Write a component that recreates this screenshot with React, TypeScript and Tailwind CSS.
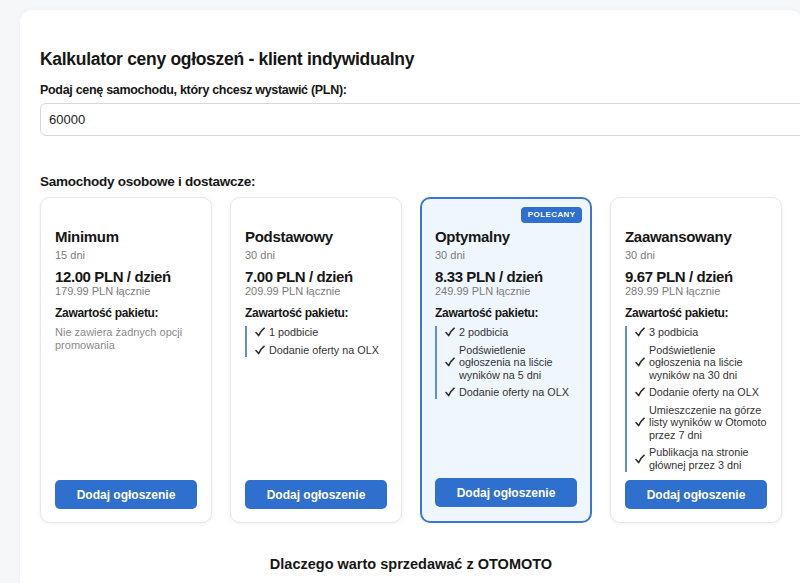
import React from "react";

type Item = React.ReactNode;

type Plan = {
  name: string;
  days: string;
  perDay: string;
  total: string;
  items: Item[] | null;
  featured?: boolean;
};

const plans: Plan[] = [
  {
    name: "Minimum",
    days: "15 dni",
    perDay: "12.00 PLN / dzień",
    total: "179.99 PLN łącznie",
    items: null,
  },
  {
    name: "Podstawowy",
    days: "30 dni",
    perDay: "7.00 PLN / dzień",
    total: "209.99 PLN łącznie",
    items: ["1 podbicie", "Dodanie oferty na OLX"],
  },
  {
    name: "Optymalny",
    days: "30 dni",
    perDay: "8.33 PLN / dzień",
    total: "249.99 PLN łącznie",
    featured: true,
    items: [
      "2 podbicia",
      <>
        Podświetlenie
        <br />
        ogłoszenia na liście
        <br />
        wyników na 5 dni
      </>,
      "Dodanie oferty na OLX",
    ],
  },
  {
    name: "Zaawansowany",
    days: "30 dni",
    perDay: "9.67 PLN / dzień",
    total: "289.99 PLN łącznie",
    items: [
      "3 podbicia",
      <>
        Podświetlenie
        <br />
        ogłoszenia na liście
        <br />
        wyników na 30 dni
      </>,
      "Dodanie oferty na OLX",
      <>
        Umieszczenie na górze
        <br />
        listy wyników w Otomoto
        <br />
        przez 7 dni
      </>,
      <>
        Publikacja na stronie
        <br />
        głównej przez 3 dni
      </>,
    ],
  },
];

function Check() {
  return (
    <svg width="10" height="10" viewBox="0 0 10 10" className="shrink-0">
      <path
        d="M1 5.6 L3.6 8.6 Q5.6 4.2 9.2 1.2"
        fill="none"
        stroke="#2b2b2b"
        strokeWidth="1.5"
        strokeLinecap="round"
        strokeLinejoin="round"
      />
    </svg>
  );
}

function Card({ plan }: { plan: Plan }) {
  const base = plan.featured
    ? "relative flex flex-col rounded-[10px] border-2 border-[#3b78d1] bg-[#f0f6fe] px-[13px] pt-[27.5px] pb-[14px]"
    : "relative flex flex-col rounded-[10px] border border-[#e6e8eb] bg-white px-[14px] pt-[28.5px] pb-[13px] shadow-[0_1px_4px_rgba(0,0,0,0.06)]";
  return (
    <div className={base}>
      {plan.featured && (
        <div className="absolute right-[8px] top-[8px] rounded-[4px] bg-[#2f6fcd] px-[6.5px] text-[8px] font-bold leading-[16px] tracking-[0.4px] text-white">
          POLECANY
        </div>
      )}
      <div className="text-[15px] font-bold leading-[20px] tracking-[-0.3px] text-[#161616]">{plan.name}</div>
      <div className="mt-[1px] text-[11px] leading-[14px] text-[#7b7b7b]">{plan.days}</div>
      <div className="mt-[7px] text-[15px] font-bold leading-[16px] tracking-[-0.4px] text-[#161616]">{plan.perDay}</div>
      <div className="text-[11px] leading-[13px] text-[#7b7b7b]">{plan.total}</div>
      <div className="mt-[7.5px] text-[12px] font-bold leading-[16px] tracking-[-0.3px] text-[#161616]">Zawartość pakietu:</div>
      {plan.items === null ? (
        <div className="mt-[5px] text-[11px] leading-[12.5px] text-[#8a8a8a]">
          Nie zawiera żadnych opcji
          <br />
          promowania
        </div>
      ) : (
        <ul className="mt-[4.5px] flex flex-col gap-[5px] border-l-2 border-[#5b8fd8] py-[0.5px] pl-[8px]">
          {plan.items.map((it, i) => (
            <li key={i} className="flex items-center gap-[4px] whitespace-nowrap text-[10.8px] leading-[12.5px] text-[#333]">
              <Check />
              <span>{it}</span>
            </li>
          ))}
        </ul>
      )}
      <button className="mt-auto h-[29px] w-full rounded-[5px] bg-[#2f6fcd] text-[12px] font-bold text-white">
        Dodaj ogłoszenie
      </button>
    </div>
  );
}

export default function App() {
  return (
    <div
      className="min-h-[583px] w-full overflow-hidden bg-[#f6f7f8] pt-[10px] pl-[20px]"
      style={{ fontFamily: "'Liberation Sans', Arial, 'DejaVu Sans', sans-serif" }}
    >
      <div className="w-[782px] rounded-[12px] bg-white px-[20px] pt-[38px] pb-[20px] shadow-[0_0_6px_rgba(0,0,0,0.04)]">
        <h1 className="text-[17.5px] font-bold leading-[22px] tracking-[-0.3px] text-[#161616]">
          Kalkulator ceny ogłoszeń - klient indywidualny
        </h1>
        <label className="mt-[12px] block text-[12.5px] font-bold leading-[16px] tracking-[-0.3px] text-[#161616]">
          Podaj cenę samochodu, który chcesz wystawić (PLN):
        </label>
        <div className="mt-[5px] flex h-[33px] w-[770px] items-center rounded-[6px] border border-[#d6d8db] bg-white px-[8px] text-[13px] text-[#1c1c1c]">
          60000
        </div>
        <div className="mt-[38px] text-[13.5px] font-bold leading-[16px] tracking-[-0.25px] text-[#161616]">
          Samochody osobowe i dostawcze:
        </div>
        <div className="mt-[7px] grid h-[326px] grid-cols-4 gap-[18px]">
          {plans.map((p) => (
            <Card key={p.name} plan={p} />
          ))}
        </div>
        <div className="mt-[32px] text-center text-[14.5px] font-bold leading-[18px] text-[#161616]">
          Dlaczego warto sprzedawać z OTOMOTO
        </div>
      </div>
    </div>
  );
}
